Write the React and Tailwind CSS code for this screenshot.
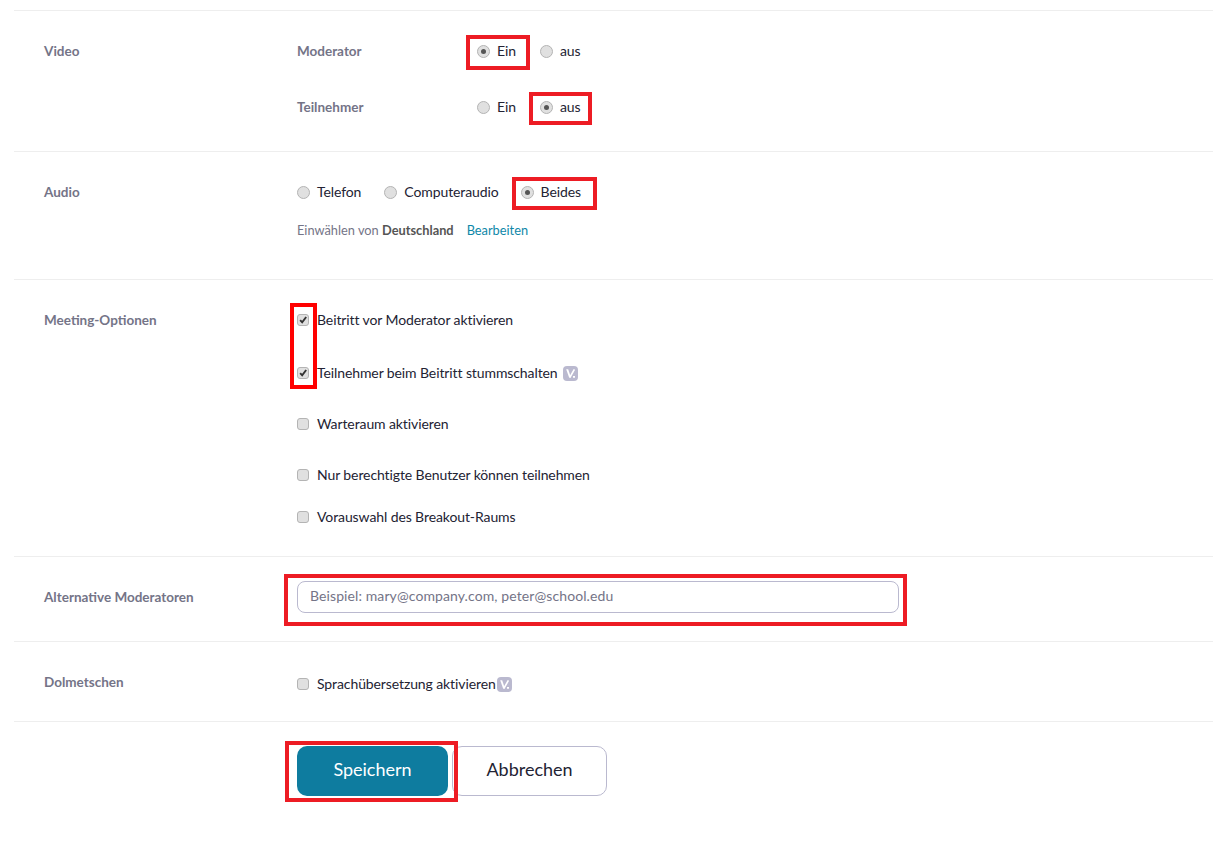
const Radio = ({ checked }) => (
  <span className="w-[13px] h-[13px] rounded-full bg-[#e0e0e0] border border-[#b4b4b4] flex items-center justify-center shrink-0">
    {checked && <span className="w-[5px] h-[5px] rounded-full bg-[#555555]" />}
  </span>
);

const RadioItem = ({ label, checked, className = '', children }) => (
  <label className={`relative flex items-center gap-[7px] text-sm tracking-[-0.1px] text-[#232333] ${className}`}>
    <Radio checked={checked} />
    <span>{label}</span>
    {children}
  </label>
);

const CheckItem = ({ label, checked, className = '', badge, gap = '' }) => (
  <label className={`h-5 flex items-center text-sm tracking-[-0.1px] text-[#232333] ${className}`}>
    <span className="w-3 h-3 rounded-[3px] bg-[#e0e0e0] border border-[#b4b4b4] flex items-center justify-center shrink-0">
      {checked && (
        <svg viewBox="0 0 12 12" className="w-3 h-3">
          <path d="M2.6 6.2 L5 8.8 L9.8 2.4" fill="none" stroke="#333333" strokeWidth="2.3" />
        </svg>
      )}
    </span>
    <span className="ml-2">{label}</span>
    {badge && <Badge className={gap} />}
  </label>
);

const Badge = ({ className = '' }) => (
  <span className={`w-[15px] h-[15px] rounded-[4px] bg-[#bab9cf] flex items-center justify-center ${className}`}>
    <svg viewBox="0 0 15 15" className="w-[15px] h-[15px]">
      <path d="M3.2 3.2 L6.2 11.8 L8 11.8 L5.2 3.2 Z" fill="#ffffff" />
      <path d="M7 11.2 L11.4 3.4 M10 10.8 h2" fill="none" stroke="#ffffff" strokeWidth="1.7" />
    </svg>
  </span>
);

const Row = ({ label, className = '', children }) => (
  <div className={`flex border-t border-[#eeeeee] ${className}`}>
    <div className="w-[283px] pl-[30px] shrink-0 text-[13.5px] font-bold text-[#747487]">{label}</div>
    <div className="flex-1">{children}</div>
  </div>
);

export default function App() {
  return (
    <div className="min-h-[853px] bg-white pt-[10px] pl-[14px] font-['Lato',sans-serif] overflow-hidden">
      <Row label={<div className="mt-[30px] leading-5">Video</div>} className="h-[141px]">
        <div className="pt-[30px] flex items-center h-[50px]">
          <span className="w-[180px] text-[13.5px] font-bold text-[#747487]">Moderator</span>
          <RadioItem label="Ein" checked>
            <span className="absolute left-[-11px] right-[-14px] top-[-6px] bottom-[-9px] border-[4px] border-[#ed1c24]" />
          </RadioItem>
          <RadioItem label="aus" className="ml-6" />
        </div>
        <div className="mt-[36px] flex items-center h-5">
          <span className="w-[180px] text-[13.5px] font-bold text-[#747487]">Teilnehmer</span>
          <RadioItem label="Ein" />
          <RadioItem label="aus" className="ml-6" checked>
            <span className="absolute left-[-11px] right-[-12px] top-[-5px] bottom-[-8px] border-[4px] border-[#ed1c24]" />
          </RadioItem>
        </div>
      </Row>

      <Row label={<div className="mt-[30px] leading-5">Audio</div>} className="h-[128px]">
        <div className="pt-[30px] flex items-center h-[50px]">
          <RadioItem label="Telefon" />
          <RadioItem label="Computeraudio" className="ml-[23px]" />
          <RadioItem label="Beides" className="ml-[22px]" checked>
            <span className="absolute left-[-9px] right-[-16px] top-[-5px] bottom-[-8px] border-[4px] border-[#ed1c24]" />
          </RadioItem>
        </div>
        <p className="mt-[18px] text-[12.8px] leading-5 text-[#747487]">
          Einwählen von <b className="text-[#555555]">Deutschland</b>
          <span className="ml-[13px] text-[#0e87a8]">Bearbeiten</span>
        </p>
      </Row>

      <Row label={<div className="mt-[30px] leading-5">Meeting-Optionen</div>} className="h-[277px]">
        <div className="relative pt-[30px]">
          <span className="absolute left-[-7px] top-[23px] w-[27px] h-[86px] border-[4px] border-[#ff0000]" />
          <CheckItem label="Beitritt vor Moderator aktivieren" checked />
          <CheckItem label="Teilnehmer beim Beitritt stummschalten" checked badge gap="ml-[5px]" className="mt-[33px]" />
          <CheckItem label="Warteraum aktivieren" className="mt-[31px]" />
          <CheckItem label="Nur berechtigte Benutzer können teilnehmen" className="mt-[31px]" />
          <CheckItem label="Vorauswahl des Breakout-Raums" className="mt-[22px]" />
        </div>
      </Row>

      <Row label={<div className="mt-[30px] leading-5">Alternative Moderatoren</div>} className="h-[85px]">
        <div className="pt-[24px]">
          <div className="relative w-[602px]">
            <input
              placeholder="Beispiel: mary@company.com, peter@school.edu"
              className="w-full h-8 rounded-lg border border-[#bab9cf] px-3 pb-[3px] text-sm tracking-[0.1px] bg-white placeholder:text-[#747487]"
            />
            <span className="absolute left-[-13px] right-[-8px] top-[-7px] bottom-[-13px] border-[4px] border-[#ed1c24]" />
          </div>
        </div>
      </Row>

      <Row label={<div className="mt-[30px] leading-5">Dolmetschen</div>} className="h-[80px]">
        <div className="pt-[32px]">
          <CheckItem label="Sprachübersetzung aktivieren" badge gap="ml-[1px]" />
        </div>
      </Row>

      <div className="border-t border-[#eeeeee] pl-[283px] pt-[24px] flex">
        <div className="relative">
          <button className="w-[151px] h-[50px] pb-[4px] rounded-[10px] bg-[#0e7c9f] text-white text-lg">Speichern</button>
          <span className="absolute left-[-12px] right-[-10px] top-[-5px] bottom-[-6px] border-[4px] border-[#ed1c24]" />
        </div>
        <button className="ml-[4px] w-[155px] h-[50px] pb-[4px] rounded-[10px] border border-[#bab9cf] bg-white text-[#232333] text-lg">Abbrechen</button>
      </div>
    </div>
  );
}
